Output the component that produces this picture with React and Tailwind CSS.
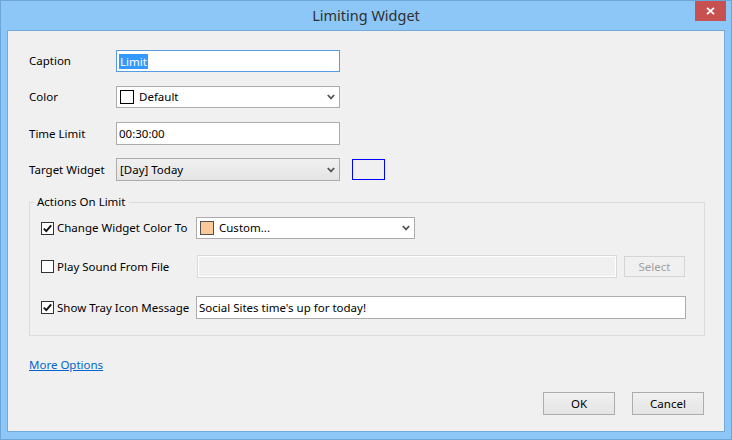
import React from "react";

const font = { fontFamily: '"Noto Sans", "Open Sans", sans-serif' };

function Chevron() {
  return (
    <svg width="8" height="6" viewBox="0 0 8 6" className="shrink-0">
      <path d="M0.8 1 L4 4.4 L7.2 1" fill="none" stroke="#555" strokeWidth="1.8" />
    </svg>
  );
}

function Check({ checked }) {
  return (
    <div className="w-[13px] h-[13px] border border-[#333] bg-white flex items-center justify-center shrink-0">
      {checked && (
        <svg width="11" height="11" viewBox="0 0 11 11">
          <path d="M1.8 5.6 L4.3 8.2 L9.2 2.3" fill="none" stroke="#111" strokeWidth="1.9" />
        </svg>
      )}
    </div>
  );
}

export default function App() {
  return (
    <div
      className="w-[732px] h-[440px] flex flex-col bg-[#8cc7f8] border border-[#6ea5d8] text-[11.5px] text-black overflow-hidden"
      style={font}
    >
      {/* Title bar */}
      <div className="relative h-[29px] shrink-0 flex items-center justify-center">
        <span className="text-[14.5px] text-[#2f2f2f] leading-none">Limiting Widget</span>
        <div className="absolute top-0 right-[5px] w-[31px] h-[20px] bg-[#c75050] flex items-center justify-center">
          <svg width="9" height="8" viewBox="0 0 9 8">
            <path d="M1 0.8 L8 7.2 M8 0.8 L1 7.2" stroke="white" strokeWidth="1.8" />
          </svg>
        </div>
      </div>

      {/* Client area */}
      <div className="flex-1 ml-[6px] mr-[6px] mb-[7px] border border-[#75a9d9] bg-[#f0f0f0] flex flex-col pl-[21px] pr-[20px] pt-[19px]">
        <div className="flex flex-col gap-[14px]">
          <div className="flex items-center h-[22px]">
            <div className="w-[87px]">Caption</div>
            <div className="w-[224px] h-[22px] border border-[#569de5] bg-white flex items-center pl-[2px]">
              <span className="bg-[#3399ff] text-white leading-[15px] px-[1px]">Limit</span>
            </div>
          </div>
          <div className="flex items-center h-[22px]">
            <div className="w-[87px]">Color</div>
            <div className="w-[224px] h-[22px] border border-[#acacac] bg-white flex items-center pl-[3px] pr-[4px]">
              <div className="w-[14px] h-[14px] border border-black bg-white" />
              <span className="ml-[5px] flex-1">Default</span>
              <Chevron />
            </div>
          </div>
          <div className="flex items-center h-[23px]">
            <div className="w-[87px]">Time Limit</div>
            <div className="w-[224px] h-[23px] border border-[#acacac] bg-white flex items-center pl-[2px]">
              00:30:00
            </div>
          </div>
          <div className="flex items-center h-[23px] -mt-[1px]">
            <div className="w-[87px]">Target Widget</div>
            <div className="w-[224px] h-[23px] border border-[#acacac] bg-gradient-to-b from-[#f0f0f0] to-[#e5e5e5] flex items-center pl-[3px] pr-[4px]">
              <span className="flex-1">[Day] Today</span>
              <Chevron />
            </div>
            <div className="ml-[12px] w-[33px] h-[21px] border border-[#0000ff]" />
          </div>
        </div>

        {/* Group box */}
        <fieldset className="mt-[13px] border border-[#dcdcdc] w-[676px] p-0">
          <legend className="ml-[4px] px-[3px] h-[16px] leading-[16px]">Actions On Limit</legend>
          <div className="pt-[7px] pl-[11px] pb-[16px] flex flex-col">
            <div className="flex items-center h-[22px]">
              <div className="w-[155px] flex items-center">
                <Check checked />
                <span className="ml-[3px]">Change Widget Color To</span>
              </div>
              <div className="w-[219px] h-[22px] border border-[#acacac] bg-white flex items-center pl-[3px] pr-[4px]">
                <div className="w-[14px] h-[14px] border border-[#505050] bg-[#fbc89a]" />
                <span className="ml-[5px] flex-1">Custom...</span>
                <Chevron />
              </div>
            </div>
            <div className="flex items-center h-[23px] mt-[16px]">
              <div className="w-[156px] flex items-center">
                <Check />
                <span className="ml-[3px]">Play Sound From File</span>
              </div>
              <div className="w-[420px] h-[23px] border border-[#d9d9d9] bg-[#f0f0f0] shadow-[inset_0_0_0_1px_#ffffff]" />
              <div className="ml-[7px] w-[61px] h-[21px] border border-[#d5d5d5] bg-[#f0f0f0] text-[#a0a0a0] flex items-center justify-center">
                Select
              </div>
            </div>
            <div className="flex items-center h-[23px] mt-[18px]">
              <div className="w-[155px] flex items-center">
                <Check checked />
                <span className="ml-[3px]">Show Tray Icon Message</span>
              </div>
              <div className="w-[490px] h-[23px] border border-[#acacac] bg-white flex items-center pl-[2px]">
                Social Sites time's up for today!
              </div>
            </div>
          </div>
        </fieldset>

        <div className="mt-[21px] leading-[16px]">
          <span className="text-[#0066cc] underline">More Options</span>
        </div>

        <div className="mt-[19px] flex justify-end gap-[17px]">
          <div className="w-[72px] h-[23px] border border-[#acacac] bg-gradient-to-b from-[#f0f0f0] to-[#e5e5e5] flex items-center justify-center">
            OK
          </div>
          <div className="w-[72px] h-[23px] border border-[#acacac] bg-gradient-to-b from-[#f0f0f0] to-[#e5e5e5] flex items-center justify-center">
            Cancel
          </div>
        </div>
      </div>
    </div>
  );
}
